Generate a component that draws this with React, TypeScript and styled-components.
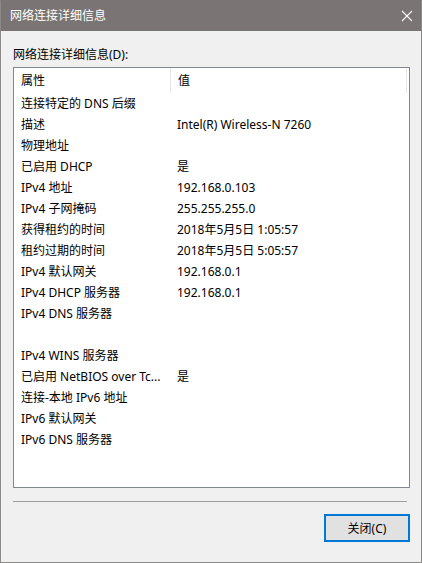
import React from 'react';
import styled, { createGlobalStyle } from 'styled-components';

const GlobalStyle = createGlobalStyle`
    html, body {
        margin: 0;
        padding: 0;
        background: #f0f0f0;
    }
    body {
        font-family: 'Noto Sans', 'Noto Sans CJK SC', sans-serif;
        font-size: 12px;
        color: #000;
    }
`;

const rows: [string, string][] = [
    ['连接特定的 DNS 后缀', ''],
    ['描述', 'Intel(R) Wireless-N 7260'],
    ['物理地址', ''],
    ['已启用 DHCP', '是'],
    ['IPv4 地址', '192.168.0.103'],
    ['IPv4 子网掩码', '255.255.255.0'],
    ['获得租约的时间', '2018年5月5日 1:05:57'],
    ['租约过期的时间', '2018年5月5日 5:05:57'],
    ['IPv4 默认网关', '192.168.0.1'],
    ['IPv4 DHCP 服务器', '192.168.0.1'],
    ['IPv4 DNS 服务器', ''],
    ['', ''],
    ['IPv4 WINS 服务器', ''],
    ['已启用 NetBIOS over Tc...', '是'],
    ['连接-本地 IPv6 地址', ''],
    ['IPv6 默认网关', ''],
    ['IPv6 DNS 服务器', ''],
];

export default function App() {
    return (
        <>
            <GlobalStyle />
            <Window>
                <TitleBar>
                    <Title>网络连接详细信息</Title>
                    <CloseIcon width="12" height="12" viewBox="0 0 12 12">
                        <path d="M1 1 L11 11 M11 1 L1 11" stroke="#fff" strokeWidth="1.1" fill="none" />
                    </CloseIcon>
                </TitleBar>
                <Body>
                    <Label>网络连接详细信息(D):</Label>
                    <ListBox>
                        <HeaderRow>
                            <HeaderCell>属性</HeaderCell>
                            <HeaderCell $last>值</HeaderCell>
                        </HeaderRow>
                        {rows.map(([name, value], i) => (
                            <Row key={i}>
                                <NameCell>{name}</NameCell>
                                <ValueCell>{value}</ValueCell>
                            </Row>
                        ))}
                    </ListBox>
                    <Separator />
                    <Footer>
                        <CloseButton>关闭(C)</CloseButton>
                    </Footer>
                </Body>
            </Window>
        </>
    );
}

const Window = styled.div`
    width: 422px;
    height: 563px;
    box-sizing: border-box;
    border: 1px solid #8c8a89;
    border-top-color: #7a7574;
    background: #f0f0f0;
    display: flex;
    flex-direction: column;
`;

const TitleBar = styled.div`
    height: 30px;
    background: #7a7574;
    color: #fff;
    display: flex;
    align-items: center;
    justify-content: space-between;
    padding: 0 8px 0 9px;
`;

const Title = styled.span`
    font-size: 12px;
    line-height: 16px;
`;

const CloseIcon = styled.svg`
    display: block;
`;

const Body = styled.div`
    flex: 1;
    padding: 0 11px 0 12px;
    display: flex;
    flex-direction: column;
`;

const Label = styled.div`
    margin-top: 15px;
    line-height: 17px;
    height: 21px;
`;

const ListBox = styled.div`
    box-sizing: border-box;
    width: 397px;
    height: 421px;
    padding-top: 1px;
    border: 1px solid #828790;
    background: #fff;
    overflow: hidden;
`;

const HeaderRow = styled.div`
    display: flex;
    height: 24px;
`;

const HeaderCell = styled.div<{ $last?: boolean }>`
    box-sizing: border-box;
    width: ${(p) => (p.$last ? '236px' : '157px')};
    padding-left: 7px;
    line-height: 24px;
    border-right: 1px solid #e5e5e5;
`;

const Row = styled.div`
    display: flex;
    height: 21px;
    line-height: 21px;
    white-space: nowrap;
`;

const NameCell = styled.div`
    box-sizing: border-box;
    width: 157px;
    padding-left: 7px;
    overflow: hidden;
`;

const ValueCell = styled.div`
    padding-left: 6px;
`;

const Separator = styled.div`
    width: 394px;
    height: 1px;
    background: #a0a0a0;
    margin-top: 13px;
`;

const Footer = styled.div`
    display: flex;
    justify-content: flex-end;
    width: 397px;
    margin-top: 12px;
`;

const CloseButton = styled.button`
    box-sizing: border-box;
    width: 86px;
    height: 28px;
    border: 2px solid #0078d7;
    background: #e1e1e1;
    font-family: inherit;
    font-size: 12px;
    color: #000;
    padding: 0;
`;
